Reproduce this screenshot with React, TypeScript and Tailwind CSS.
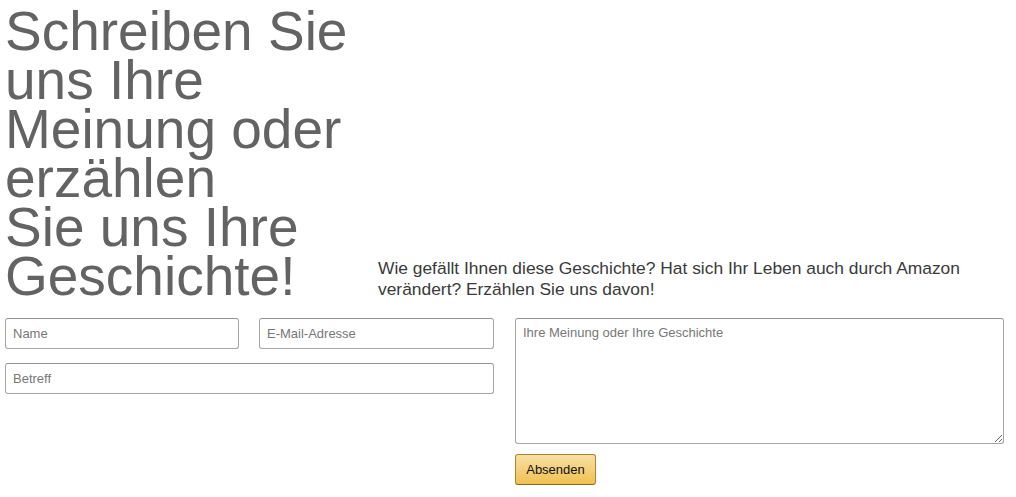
import React from "react";

export default function App() {
  return (
    <div className="w-[1016px] h-[497px] bg-white overflow-hidden pl-[5px] pr-[12px] font-['Liberation_Sans',Arial,sans-serif]">
      <div className="flex items-end pt-[7px]">
        <h1 className="w-[373px] shrink-0 text-[55px] leading-[49px] text-[#636363] font-normal whitespace-nowrap">
          Schreiben Sie
          <br />
          uns Ihre
          <br />
          Meinung oder
          <br />
          erzählen
          <br />
          Sie uns Ihre
          <br />
          Geschichte!
        </h1>
        <p className="text-[17.4px] leading-[21px] text-[#3a3a3a] pb-[1px] w-[626px]">
          Wie gefällt Ihnen diese Geschichte? Hat sich Ihr Leben auch durch Amazon verändert? Erzählen Sie uns davon!
        </p>
      </div>
      <div className="flex gap-[21px] mt-[17px]">
        <div className="w-[489px] flex flex-col gap-[14px]">
          <div className="flex gap-[20px]">
            <input
              placeholder="Name"
              className="w-[234px] h-[31px] border border-[#a6a6a6] border-t-[#949494] rounded-[3px] px-[7px] text-[13px] placeholder:text-[#777] outline-none"
            />
            <input
              placeholder="E-Mail-Adresse"
              className="w-[235px] h-[31px] border border-[#a6a6a6] border-t-[#949494] rounded-[3px] px-[7px] text-[13px] placeholder:text-[#777] outline-none"
            />
          </div>
          <input
            placeholder="Betreff"
            className="w-[489px] h-[31px] border border-[#a6a6a6] border-t-[#949494] rounded-[3px] px-[7px] text-[13px] placeholder:text-[#777] outline-none"
          />
        </div>
        <div className="w-[489px] flex flex-col items-start gap-[10px]">
          <textarea
            placeholder="Ihre Meinung oder Ihre Geschichte"
            className="w-[489px] h-[126px] border border-[#a6a6a6] border-t-[#949494] rounded-[3px] px-[7px] pt-[6px] text-[13px] leading-[16px] placeholder:text-[#777] outline-none resize"
          />
          <button className="h-[31px] w-[81px] rounded-[3px] border border-[#a88734] border-b-[#846a29] bg-gradient-to-b from-[#f7dfa5] to-[#f0c14b] text-[13px] text-[#111]">
            Absenden
          </button>
        </div>
      </div>
    </div>
  );
}
